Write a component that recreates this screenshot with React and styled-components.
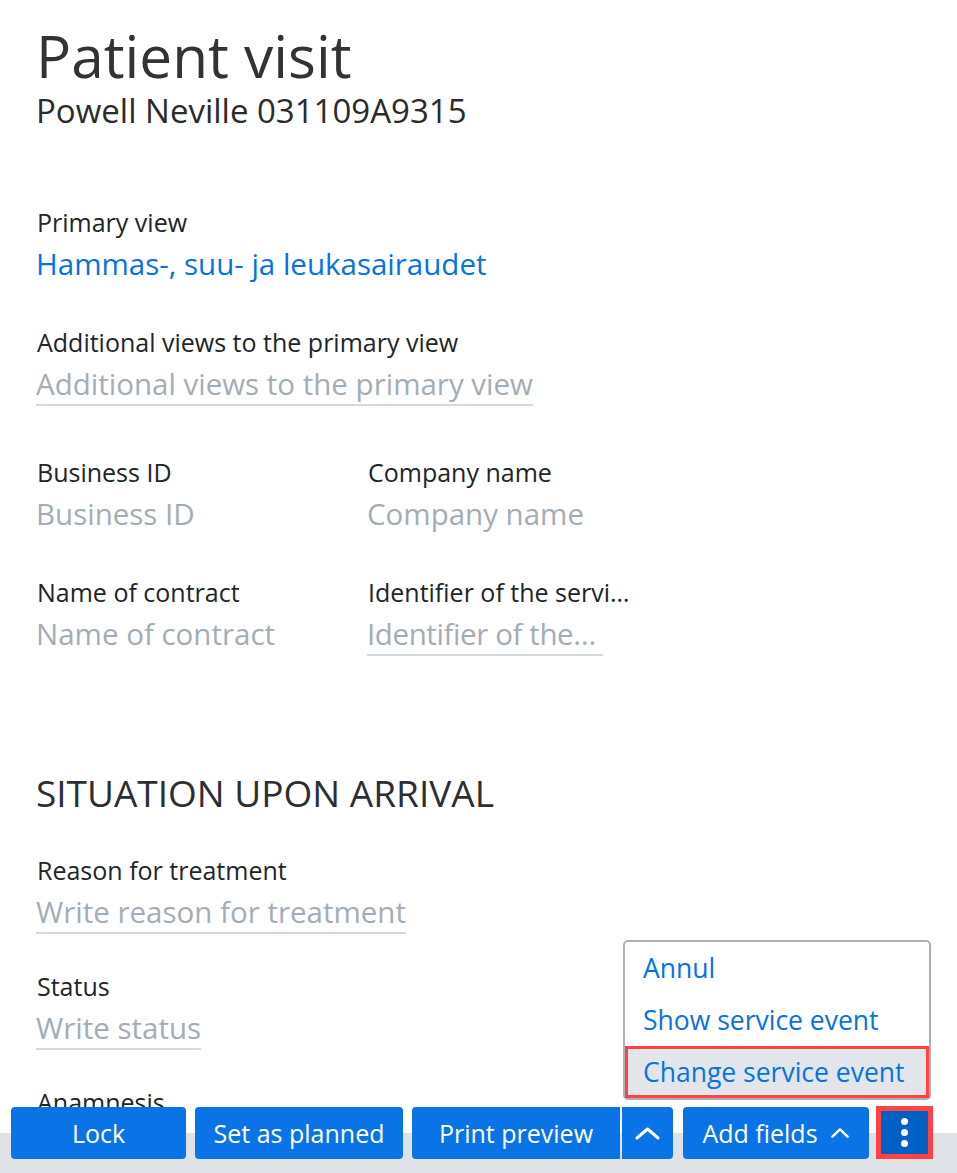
import React from 'react'
import styled, { createGlobalStyle } from 'styled-components'

const GlobalStyle = createGlobalStyle`
  html, body {
    margin: 0;
    padding: 0;
    background: #fff;
    font-family: "Open Sans", "Noto Sans", sans-serif;
    color: #2b2f33;
  }
`

const Page = styled.div`
  padding: 20px 36px 140px 36px;
`

const Title = styled.h1`
  margin: 0;
  font-size: 58.5px;
  line-height: 70px;
  font-weight: 400;
  color: #333;
`

const Subtitle = styled.div`
  margin-top: 1px;
  font-size: 33px;
  line-height: 40px;
  color: #2b2b2b;
`

const Form = styled.div`
  margin-top: 76px;
  padding-left: 1px;
`

const FieldBox = styled.div`
  margin-bottom: ${p => p.$space ?? 41}px;
  max-width: ${p => p.$max ? p.$max + 'px' : 'none'};
`

const Label = styled.div`
  font-size: 25px;
  line-height: 30px;
  color: #212529;
  white-space: nowrap;
  overflow: ${p => p.$clip ? 'hidden' : 'visible'};
  text-overflow: ellipsis;
`

const Value = styled.div`
  margin-top: 9px;
  margin-left: -1px;
  display: inline-block;
  max-width: ${p => p.$max ? p.$max + 'px' : 'none'};
  font-size: 29.5px;
  line-height: 36px;
  padding-bottom: 2px;
  white-space: nowrap;
  overflow: ${p => p.$max ? 'hidden' : 'visible'};
  text-overflow: ellipsis;
  letter-spacing: ${p => p.$max ? '-0.4px' : 'normal'};
  color: ${p => p.$link ? '#0872e2' : '#a3adb7'};
  border-bottom: 2px solid ${p => p.$line ? '#d6dadf' : 'transparent'};
`

const Row = styled.div`
  display: grid;
  grid-template-columns: 331px 272px;
`

const SectionTitle = styled.h2`
  margin: 109px 0 39px -1px;
  font-size: 37px;
  line-height: 46px;
  font-weight: 400;
  color: #2b2f33;
`

const Footer = styled.div`
  position: fixed;
  left: 0;
  right: 0;
  bottom: 0;
  height: 66px;
  background: linear-gradient(to bottom, transparent 26px, #dee2e6 26px);
`

const Buttons = styled.div`
  display: flex;
  align-items: flex-start;
  padding-left: 11px;
  gap: 9px;
`

const Button = styled.button`
  height: 52px;
  width: ${p => p.$w}px;
  border: none;
  border-radius: ${p => p.$radius ?? '4px'};
  background: #0a74e6;
  color: #fff;
  font-family: "Open Sans", "Noto Sans", sans-serif;
  font-size: 25px;
  display: flex;
  align-items: center;
  justify-content: center;
  gap: 12px;
  padding: 0;
  cursor: pointer;
`

const Group = styled.div`
  display: flex;
  gap: 2px;
  margin-right: 1px;
`

const MoreWrap = styled.div`
  position: relative;
  margin-left: -2px;
`

const MoreButton = styled.button`
  box-sizing: border-box;
  width: 57px;
  height: 53px;
  margin-top: -1px;
  border: 5px solid #ff4343;
  background: #0060c6;
  display: flex;
  flex-direction: column;
  align-items: center;
  justify-content: center;
  gap: 4px;
  padding: 0;
`

const Dot = styled.span`
  width: 7px;
  height: 7px;
  border-radius: 50%;
  background: #fff;
`

const Menu = styled.div`
  position: absolute;
  right: 2px;
  bottom: calc(100% + 7px);
  width: 308px;
  box-sizing: border-box;
  background: #fff;
  border: 2px solid #a9b0b7;
  border-radius: 5px;
  display: flex;
  flex-direction: column;
`

const MenuItem = styled.div`
  height: 52px;
  line-height: 52px;
  padding-left: 18px;
  font-size: 26.5px;
  color: #0872e2;
  white-space: nowrap;
  background: ${p => p.$active ? '#e2e6ea' : 'transparent'};
  box-shadow: ${p => p.$active ? 'inset 0 0 0 3px #ff4343' : 'none'};
`

const Chevron = ({ w, h, sw }) => (
  <svg width={w} height={h} viewBox={`0 0 ${w} ${h}`} fill="none">
    <polyline
      points={`${sw},${h - sw} ${w / 2},${sw} ${w - sw},${h - sw}`}
      stroke="#fff"
      strokeWidth={sw}
      strokeLinecap="round"
      strokeLinejoin="round"
    />
  </svg>
)

const Field = ({ label, value, link, line, space, max, valueMax }) => (
  <FieldBox $space={space} $max={max}>
    <Label $clip={!!max}>{label}</Label>
    <Value $link={link} $line={line} $max={valueMax}>{value}</Value>
  </FieldBox>
)

export default function App() {
  return (
    <>
      <GlobalStyle />
      <Page>
        <Title>Patient visit</Title>
        <Subtitle>Powell Neville 031109A9315</Subtitle>
        <Form>
          <Field label="Primary view" value="Hammas-, suu- ja leukasairaudet" link />
          <Field label="Additional views to the primary view" value="Additional views to the primary view" line space={51} />
          <Row>
            <Field label="Business ID" value="Business ID" />
            <Field label="Company name" value="Company name" />
          </Row>
          <Row>
            <Field label="Name of contract" value="Name of contract" space={0} />
            <Field label="Identifier of the service event" value="Identifier of the service event" line space={0} max={274} valueMax={236} />
          </Row>
          <SectionTitle>SITUATION UPON ARRIVAL</SectionTitle>
          <Field label="Reason for treatment" value="Write reason for treatment" line space={37} />
          <Field label="Status" value="Write status" line space={37} />
          <Field label="Anamnesis" value="Write anamnesis" line />
        </Form>
      </Page>
      <Footer>
        <Buttons>
          <Button $w={175}>Lock</Button>
          <Button $w={208}>Set as planned</Button>
          <Group>
            <Button $w={208} $radius="4px 0 0 4px">Print preview</Button>
            <Button $w={51} $radius="0 4px 4px 0"><Chevron w={27} h={15} sw={3} /></Button>
          </Group>
          <Button $w={186}>Add fields <Chevron w={20} h={12} sw={2.4} /></Button>
          <MoreWrap>
            <Menu>
              <MenuItem>Annul</MenuItem>
              <MenuItem>Show service event</MenuItem>
              <MenuItem $active>Change service event</MenuItem>
            </Menu>
            <MoreButton>
              <Dot />
              <Dot />
              <Dot />
            </MoreButton>
          </MoreWrap>
        </Buttons>
      </Footer>
    </>
  )
}
